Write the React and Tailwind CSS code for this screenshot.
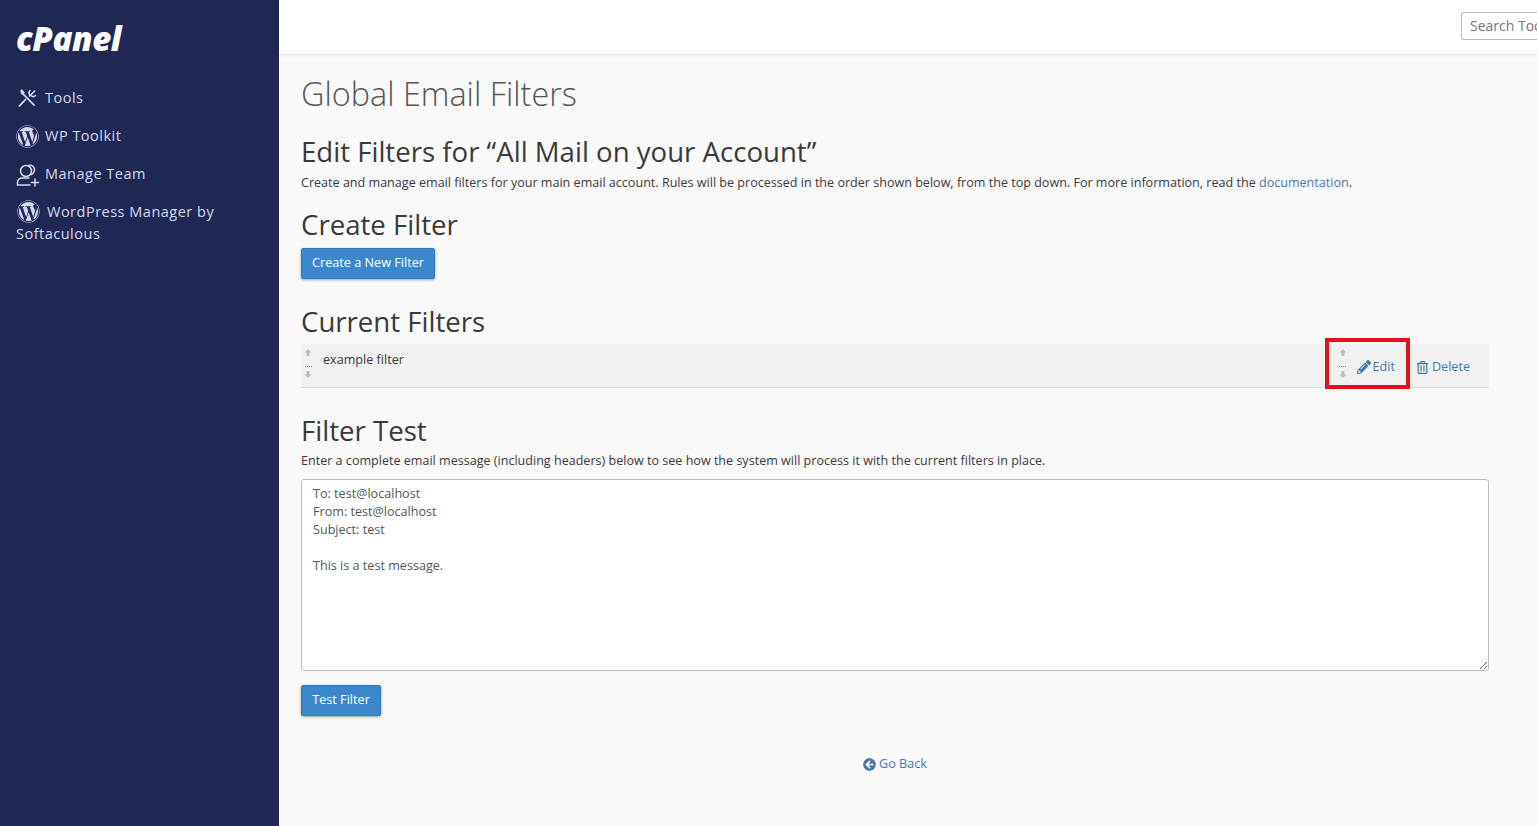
import { FaWordpress, FaPencilAlt, FaRegTrashAlt, FaArrowCircleLeft } from 'react-icons/fa';

const font = 'font-["Open_Sans",sans-serif]';

function ToolsIcon() {
  return (
    <svg width="22" height="22" viewBox="0 0 22 22" fill="none" stroke="currentColor" strokeWidth="1.5" strokeLinecap="round" strokeLinejoin="round">
      {/* screwdriver */}
      <path d="M4.500 3.500l1.500-1 2.500 3-.6 1.200L19 18l-1 1L6.800 7.700 5.600 7.200z" fill="currentColor" strokeWidth="0.4" />
      {/* wrench */}
      <path d="M13.500 9l5.200-5M14 3.500a3.200 3.200 0 0 0 0 4.500M19.500 8.500a3.200 3.200 0 0 1-4.500 0" />
      <path d="M9.500 12.500L3.500 18.800" strokeWidth="1.800" />
    </svg>
  );
}

function TeamIcon() {
  return (
    <svg width="24" height="24" viewBox="0 0 24 24" fill="none" stroke="currentColor" strokeWidth="1.500" strokeLinecap="round" strokeLinejoin="round">
      <circle cx="10" cy="8" r="5.500" />
      <path d="M13 2.300c3.500-.4 5.800 2 5.500 5-.2 2-1.300 3.400-3 4.300" />
      <path d="M1.500 22v-2.500c0-2.800 2.500-4.500 5-4.500h6.500" />
      <path d="M14 22H1.500" />
      <path d="M19 16v7M15.500 19.500h7" />
    </svg>
  );
}

function Grip({ className }) {
  return (
    <div className={`flex w-[8px] flex-col items-center ${className}`}>
      <svg width="8" height="7" viewBox="0 0 8 7"><path d="M4 0l3.500 3.500H5.500V7h-3V3.500H.5z" fill="#bdbdbd" /></svg>
      <div className="mt-[10px] mb-[4px] w-[7px] border-t border-dotted border-[#888]" />
      <svg width="8" height="7" viewBox="0 0 8 7"><path d="M4 7L.5 3.500h2V0h3v3.500h2z" fill="#bdbdbd" /></svg>
    </div>
  );
}

function NavItem({ icon, children, gap = 'mr-[6px]' }) {
  return (
    <a className="block px-4 py-[5px] text-[14.5px] leading-[22px] tracking-[0.5px] text-[#d6daec]">
      <span className={`inline-block h-[22px] w-[23px] align-top ${gap}`}>{icon}</span>
      {children}
    </a>
  );
}

export default function App() {
  return (
    <div className={`flex min-h-[826px] ${font} text-[#3a3a3a]`}>
      <aside className="w-[279px] shrink-0 bg-[#1f2755]">
        <div className="h-[82px] pl-4 pt-[20px]">
          <div className="text-[33px] leading-[38px] font-extrabold italic tracking-[-0.4px] text-white">cPanel</div>
        </div>
        <nav className="flex flex-col gap-[6px]">
          <NavItem icon={<ToolsIcon />}>Tools</NavItem>
          <NavItem icon={<FaWordpress size={23} />}>WP Toolkit</NavItem>
          <NavItem icon={<TeamIcon />}>Manage Team</NavItem>
          <NavItem icon={<FaWordpress size={23} className="ml-[1px] -mt-[1px]" />} gap="mr-[8px]">WordPress Manager by Softaculous</NavItem>
        </nav>
      </aside>

      <div className="flex min-w-0 flex-1 flex-col bg-[#f9f9f9]">
        <header className="flex h-[54px] justify-end overflow-hidden bg-white pt-3 shadow-[0_1px_3px_rgba(0,0,0,0.12)]">
          <div className="h-[28px] w-[76px] overflow-hidden rounded-l-[3px] border border-r-0 border-[#bbb] pl-2 text-[14px] leading-[26px] whitespace-nowrap text-[#777]">Search Tools</div>
        </header>

        <main className="px-[22px] pr-[48px]">
          <h1 className="mt-[17px] text-[32.4px] leading-[44px] font-light text-[#555]">Global Email Filters</h1>
          <h2 className="mt-[18px] text-[27.6px] leading-[36px]">Edit Filters for “All Mail on your Account”</h2>
          <p className="mt-[5px] text-[12.57px] leading-[18px]">
            Create and manage email filters for your main email account. Rules will be processed in the order shown below, from the top down. For more information, read the <a className="text-[#4678b0]">documentation</a>.
          </p>

          <h2 className="mt-[14px] text-[27.6px] leading-[36px]">Create Filter</h2>
          <button className="mt-[6px] block h-[31px] w-[134px] rounded-[2px] border border-[#2f79bd] bg-[#3a87cb] pb-[2px] text-[12.66px] text-white shadow-[0_1px_3px_rgba(0,0,0,0.35)]">Create a New Filter</button>

          <h2 className="mt-[24px] text-[27.6px] leading-[36px]">Current Filters</h2>
          <div className="mt-[5px] flex h-[44px] border-b border-[#ddd] bg-[#f1f1f1]">
            <Grip className="ml-[3px] mt-[5px]" />
            <span className="ml-[11px] mt-[7px] text-[12.6px] leading-[18px]">example filter</span>
            <div className="relative ml-auto flex items-start">
              <Grip className="mt-[5px]" />
              <a className="ml-[10px] mt-[14px] flex items-center gap-[2px] text-[12.6px] leading-[18px] text-[#4678b0]"><FaPencilAlt size={14} />Edit</a>
              <a className="ml-[21px] mr-[19px] mt-[14px] flex items-center gap-[3px] text-[12.6px] leading-[18px] text-[#4678b0]"><FaRegTrashAlt size={13} />Delete</a>
              <div className="absolute top-[-6px] left-[-14px] h-[51px] w-[85px] border-[4px] border-[#e4101f]" />
            </div>
          </div>

          <h2 className="mt-[24px] text-[27.6px] leading-[36px]">Filter Test</h2>
          <p className="mt-[4px] text-[12.57px] leading-[18px]">Enter a complete email message (including headers) below to see how the system will process it with the current filters in place.</p>
          <textarea
            readOnly
            className="mt-[9px] block h-[192px] w-full rounded-[3px] border border-[#bbb] bg-white px-[11px] py-[5px] text-[12.6px] leading-[18px] text-[#555]"
            value={'To: test@localhost\nFrom: test@localhost\nSubject: test\n\nThis is a test message.'}
          />
          <button className="mt-[14px] block h-[31px] w-[80px] rounded-[2px] border border-[#2f79bd] bg-[#3a87cb] pb-[2px] text-[12.66px] text-white shadow-[0_1px_3px_rgba(0,0,0,0.35)]">Test Filter</button>

          <a className="mt-[39px] flex items-center justify-center gap-[3px] text-[12.6px] leading-[18px] text-[#4678b0]"><FaArrowCircleLeft size={13} />Go Back</a>
        </main>
      </div>
    </div>
  );
}
